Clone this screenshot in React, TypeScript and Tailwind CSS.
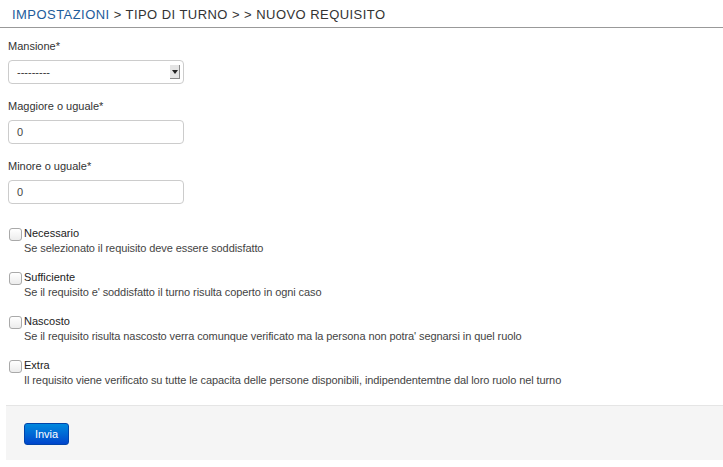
import React from "react";

const Field = ({ label, children, first }: { label: string; children: React.ReactNode; first?: boolean }) => (
  <div className={first ? "" : "mt-3"}>
    <div className="h-5 leading-5 text-[11px] text-[#333]">{label}</div>
    <div className="mt-1">{children}</div>
  </div>
);

const Check = ({ title, desc }: { title: string; desc: string }) => (
  <div className="flex h-11">
    <div className="mt-[3px] ml-[1px] h-[13px] w-[13px] rounded-[3px] border border-[#a9a9a9] bg-gradient-to-b from-white to-[#ececec]" />
    <div className="ml-[2px]">
      <div className="h-4 leading-4 text-[11px] text-[#222]">{title}</div>
      <div className="h-[14px] leading-[14px] text-[11px] tracking-[-0.09px] text-[#444]">{desc}</div>
    </div>
  </div>
);

export default function App() {
  return (
    <div className="w-[723px] h-[467px] bg-white font-['Liberation_Sans',Arial,sans-serif]">
      <div className="h-7 border-b border-[#999] pl-3 pt-[7px] text-[13px] leading-[15px] tracking-[0.45px] text-[#333]">
        <span className="text-[#1d5c9b]">IMPOSTAZIONI</span> &gt; TIPO DI TURNO &gt; &gt; NUOVO REQUISITO
      </div>
      <div className="pl-2 pt-2">
        <Field label="Mansione*" first>
          <div className="flex h-6 w-[176px] items-center justify-between rounded-[4px] border border-[#ccc] pl-2 pr-[3px] text-[11px] text-[#333]">
            <span>---------</span>
            <div className="flex h-[14px] w-[10px] items-center justify-center border-r border-b border-[#888] bg-[#e4e4e4]">
              <svg width="6" height="4" viewBox="0 0 6 4"><path d="M0 0h6L3 4z" fill="#222" /></svg>
            </div>
          </div>
        </Field>
        <Field label="Maggiore o uguale*">
          <div className="flex h-6 w-[176px] items-center rounded-[4px] border border-[#ccc] pl-2 text-[11px] text-[#444]">0</div>
        </Field>
        <Field label="Minore o uguale*">
          <div className="flex h-6 w-[176px] items-center rounded-[4px] border border-[#ccc] pl-2 text-[11px] text-[#444]">0</div>
        </Field>
        <div className="mt-[21px]">
          <Check title="Necessario" desc="Se selezionato il requisito deve essere soddisfatto" />
          <Check title="Sufficiente" desc="Se il requisito e' soddisfatto il turno risulta coperto in ogni caso" />
          <Check title="Nascosto" desc="Se il requisito risulta nascosto verra comunque verificato ma la persona non potra' segnarsi in quel ruolo" />
          <Check title="Extra" desc="Il requisito viene verificato su tutte le capacita delle persone disponibili, indipendentemtne dal loro ruolo nel turno" />
        </div>
      </div>
      <div className="ml-[6px] mt-[4px] h-[55px] border-t border-[#e5e5e5] bg-[#f5f5f5] pl-[18px] pt-[15px]">
        <button className="h-[22px] w-[45px] rounded-[3px] border border-[#0044aa] bg-gradient-to-b from-[#0088dd] to-[#0044cc] text-[11px] text-white">
          Invia
        </button>
      </div>
    </div>
  );
}
